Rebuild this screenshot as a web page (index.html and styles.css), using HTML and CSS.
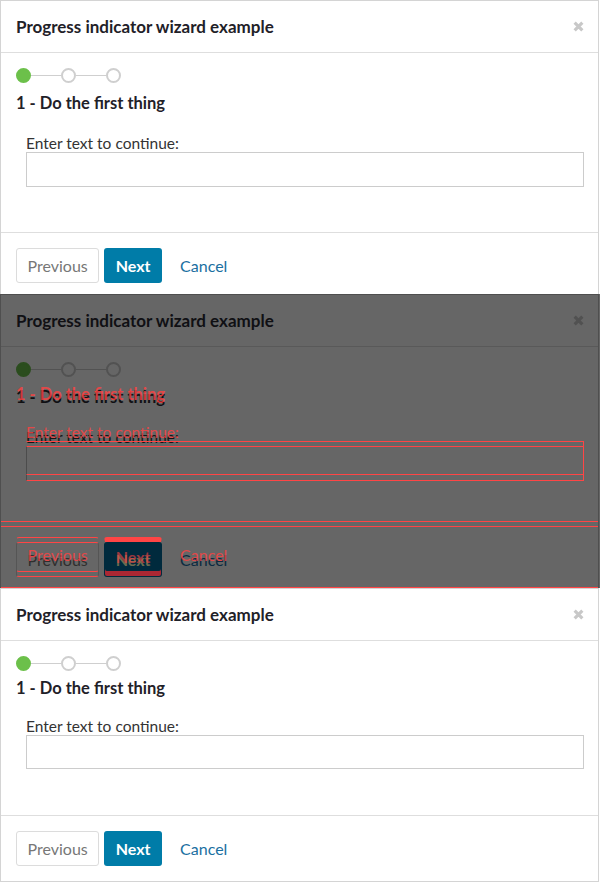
FILE: index.html
```html
<!DOCTYPE html>
<html lang="en">
<head>
<meta charset="utf-8">
<title>Progress indicator wizard example</title>
<link rel="stylesheet" href="styles.css">
</head>
<body>
<div class="stack">

  <section class="wizard wizard--a">
    <header class="wizard__head">
      <h2 class="wizard__title">Progress indicator wizard example</h2>
      <span class="wizard__close"><svg viewBox="0 0 10 10" width="10" height="10"><path d="M1.5 1.5 8.5 8.5M8.5 1.5 1.5 8.5"/></svg></span>
    </header>
    <div class="wizard__body">
      <div class="steps"><span class="step step--done"></span><span class="step-line"></span><span class="step"></span><span class="step-line"></span><span class="step"></span></div>
      <h3 class="step-title">1 - Do the first thing</h3>
      <div class="field">
        <label class="field__label">Enter text to continue:</label>
        <div class="field__input"></div>
      </div>
    </div>
    <footer class="wizard__foot">
      <span class="btn btn--default">Previous</span>
      <span class="btn btn--primary">Next</span>
      <span class="btn btn--link">Cancel</span>
    </footer>
  </section>

  <section class="diff">
    <div class="wizard wizard--a wizard--dark">
      <header class="wizard__head">
        <h2 class="wizard__title">Progress indicator wizard example</h2>
        <span class="wizard__close"><svg viewBox="0 0 10 10" width="10" height="10"><path d="M1.5 1.5 8.5 8.5M8.5 1.5 1.5 8.5"/></svg></span>
      </header>
      <div class="wizard__body">
        <div class="steps"><span class="step step--done"></span><span class="step-line"></span><span class="step"></span><span class="step-line"></span><span class="step"></span></div>
        <h3 class="step-title">1 - Do the first thing</h3>
        <div class="field">
          <label class="field__label">Enter text to continue:</label>
          <div class="field__input"></div>
        </div>
      </div>
      <footer class="wizard__foot">
        <span class="btn btn--default">Previous</span>
        <span class="btn btn--primary">Next</span>
        <span class="btn btn--link">Cancel</span>
      </footer>
    </div>
    <div class="wizard wizard--b wizard--ghost" aria-hidden="true">
      <header class="wizard__head">
        <h2 class="wizard__title">Progress indicator wizard example</h2>
        <span class="wizard__close"><svg viewBox="0 0 10 10" width="10" height="10"><path d="M1.5 1.5 8.5 8.5M8.5 1.5 1.5 8.5"/></svg></span>
      </header>
      <div class="wizard__body">
        <div class="steps"><span class="step step--done"></span><span class="step-line"></span><span class="step"></span><span class="step-line"></span><span class="step"></span></div>
        <h3 class="step-title">1 - Do the first thing</h3>
        <div class="field">
          <label class="field__label">Enter text to continue:</label>
          <div class="field__input"></div>
        </div>
      </div>
      <footer class="wizard__foot">
        <span class="btn btn--default">Previous</span>
        <span class="btn btn--primary">Next</span>
        <span class="btn btn--link">Cancel</span>
      </footer>
    </div>
  </section>

  <section class="wizard wizard--b">
    <header class="wizard__head">
      <h2 class="wizard__title">Progress indicator wizard example</h2>
      <span class="wizard__close"><svg viewBox="0 0 10 10" width="10" height="10"><path d="M1.5 1.5 8.5 8.5M8.5 1.5 1.5 8.5"/></svg></span>
    </header>
    <div class="wizard__body">
      <div class="steps"><span class="step step--done"></span><span class="step-line"></span><span class="step"></span><span class="step-line"></span><span class="step"></span></div>
      <h3 class="step-title">1 - Do the first thing</h3>
      <div class="field">
        <label class="field__label">Enter text to continue:</label>
        <div class="field__input"></div>
      </div>
    </div>
    <footer class="wizard__foot">
      <span class="btn btn--default">Previous</span>
      <span class="btn btn--primary">Next</span>
      <span class="btn btn--link">Cancel</span>
    </footer>
  </section>

</div>
</body>
</html>
```

FILE: styles.css
```css
* { box-sizing: border-box; }

html, body {
  margin: 0;
  padding: 0;
  background: #fff;
}

body {
  font-family: Lato, "Open Sans", "Liberation Sans", sans-serif;
  color: #333;
}

.stack {
  display: flex;
  flex-direction: column;
  width: 600px;
}

.wizard {
  width: 599px;
  height: 294px;
  overflow: hidden;
  background: #fff;
  border: 1px solid #d4d4d4;
  border-bottom: 0;
  display: flex;
  flex-direction: column;
}

.wizard__head {
  height: 52px;
  flex: none;
  display: flex;
  align-items: center;
  justify-content: space-between;
  padding: 0 14px 0 15px;
  border-bottom: 1px solid #dedede;
}

.wizard__title {
  margin: 0;
  font-size: 17px;
  font-weight: 700;
  color: #1f2128;
  line-height: 20px;
}

.wizard__close {
  display: flex;
  width: 11px;
  height: 11px;
}

.wizard__close svg {
  width: 11px;
  height: 11px;
}

.wizard__close svg path {
  stroke: #c8c8c8;
  stroke-width: 2.9;
  fill: none;
}

.wizard__body {
  flex: none;
  padding: 15px 14px 45px 15px;
  border-bottom: 1px solid #dedede;
}

.wizard--b .wizard__body {
  padding-bottom: 46px;
}

.steps {
  display: flex;
  align-items: center;
  height: 15px;
}

.step {
  width: 15px;
  height: 15px;
  border-radius: 50%;
  border: 2px solid #cfcfcf;
  background: #fff;
  flex: none;
}

.step--done {
  background: #6cc04a;
  border-color: #6cc04a;
}

.step-line {
  width: 30px;
  height: 1px;
  background: #cfcfcf;
}

.step-title {
  margin: 10px 0 0;
  font-size: 16.5px;
  font-weight: 700;
  line-height: 20px;
  color: #1f2128;
}

.wizard--b .step-title {
  margin-top: 7px;
}

.field {
  padding-left: 10px;
  margin-top: 21px;
}

.wizard--b .field {
  margin-top: 19px;
}

.field__label {
  display: block;
  font-size: 15.5px;
  line-height: 18px;
  color: #333;
}

.field__input {
  height: 35px;
  border: 1px solid #cccccc;
  background: #fff;
}

.wizard--b .field__input {
  height: 34px;
}

.wizard__foot {
  flex: none;
  display: flex;
  align-items: center;
  gap: 5px;
  padding: 15px 15px;
  border-bottom: 1px solid #d4d4d4;
}

.btn {
  height: 35px;
  display: inline-flex;
  align-items: center;
  padding: 0 12px;
  font-size: 16px;
  border-radius: 3px;
  border: 1px solid transparent;
  white-space: nowrap;
}

.btn--default {
  border-color: #dcdcdc;
  color: #777;
  background: #fff;
  padding: 0 10.5px;
}

.btn--primary {
  background: #007ca8;
  color: #fff;
  font-weight: 700;
  padding: 0 10.5px;
}

.btn--link {
  color: #1a6fa1;
  padding: 0 12px;
}

/* ---- diff overlay panel ---- */

.diff {
  display: grid;
  width: 600px;
  height: 294px;
  background: #666;
}

.diff > .wizard {
  grid-area: 1 / 1;
}

.wizard--dark {
  background: #666;
  border-color: #4f4f4f;
}

.wizard--dark .wizard__head { border-bottom-color: #595959; }
.wizard--dark .wizard__title,
.wizard--dark .step-title { color: #101014; }
.wizard--dark .wizard__close svg path { stroke: #515151; }
.wizard--dark .step { background: #666; border-color: #525252; }
.wizard--dark .step--done { background: #2b4d1e; border-color: #2b4d1e; }
.wizard--dark .step-line { background: #525252; }
.wizard--dark .field__label { color: #141414; }
.wizard--dark .field__input {
  background: #666;
  border-color: #ff4545;
  border-left-color: #4c4c4c;
}
.wizard--dark .wizard__body { border-bottom-color: #ff4545; }
.wizard--dark .btn--default {
  background: #666;
  color: #302e2e;
  border-color: #ff4545 #555 #ff4545 #555;
}
.wizard--dark .btn--primary {
  background: #002a3d;
  color: #6a6a50;
  box-shadow: inset 0 -5px 0 #ab2733;
}
.wizard--dark .btn--link { color: #0b2a40; }

.wizard--ghost {
  background: transparent;
  border-color: transparent;
}
.wizard--ghost .wizard__head { border-bottom-color: transparent; }
.wizard--ghost .wizard__title { color: transparent; }
.wizard--ghost .wizard__close { visibility: hidden; }
.wizard--ghost .steps { visibility: hidden; }
.wizard--ghost .step-title,
.wizard--ghost .field__label { color: rgba(255, 66, 66, 0.82); }
.wizard--ghost .field__input {
  background: transparent;
  border-color: #ff4545;
  border-left-color: transparent;
}
.wizard--ghost .wizard__body { border-bottom-color: #ff4545; }
.wizard--ghost .wizard__foot { border-bottom-color: #ff4545; }
.wizard--ghost .btn--default {
  background: transparent;
  border-color: #ff4545 transparent #ff4545 transparent;
  color: rgba(255, 66, 66, 0.82);
}
.wizard--ghost .btn--primary {
  background: transparent;
  border-top: 5px solid #ff4545;
  color: rgba(255, 66, 66, 0.6);
}
.wizard--ghost .btn--link { color: rgba(255, 66, 66, 0.82); }
```
